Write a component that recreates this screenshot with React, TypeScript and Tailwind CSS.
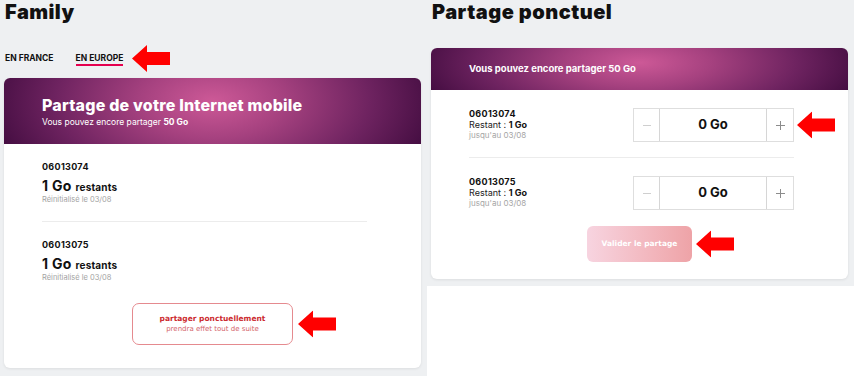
import React from 'react';

const headerBg =
  'bg-[radial-gradient(ellipse_58%_190%_at_50%_35%,#cd5997_0%,#a5417f_30%,#6e2360_65%,#3a083a_100%)]';

const RedArrow: React.FC<{ className?: string }> = ({ className }) => (
  <svg width="38" height="27" viewBox="0 0 38 27" className={className}>
    <polygon points="0,13.5 15,0 15,7 38,7 38,20 15,20 15,27" fill="#ff0000" />
  </svg>
);

const LineItem: React.FC<{ number: string }> = ({ number }) => (
  <div>
    <div className="text-[9px] leading-[12px] font-bold text-[#111] tracking-[0.3px]">{number}</div>
    <div className="mt-[4px] leading-[16px] font-bold text-[#111]">
      <span className="text-[14px] tracking-[0.3px]">1 Go</span>{' '}
      <span className="text-[10px] tracking-[0.2px]">restants</span>
    </div>
    <div className="text-[7.5px] leading-[10px] text-[#a3a3a3]">Réinitialisé le 03/08</div>
  </div>
);

const Stepper: React.FC<{ withArrow?: boolean }> = ({ withArrow }) => (
  <div className="relative flex h-[34px] border border-[#dedede] bg-white">
    <div className="w-[25px] flex items-center justify-center">
      <div className="w-[8px] h-px bg-[#cfcfcf]" />
    </div>
    <div className="w-[108px] border-x border-[#d6d6d6] flex items-center justify-center text-[13px] font-bold text-[#111]">
      0 Go
    </div>
    <div className="w-[26px] flex items-center justify-center">
      <svg width="9" height="9" viewBox="0 0 9 9">
        <path d="M4.5 0v9M0 4.5h9" stroke="#8c8c8c" strokeWidth="1" />
      </svg>
    </div>
    {withArrow && (
      <RedArrow className="absolute left-full ml-[4px] top-1/2 -translate-y-1/2" />
    )}
  </div>
);

const ShareRow: React.FC<{ number: string; withArrow?: boolean }> = ({ number, withArrow }) => (
  <div className="flex justify-between items-start">
    <div className="text-[9px] leading-[11px] text-[#222]">
      <div className="font-bold text-[#111] tracking-[0.3px]">{number}</div>
      <div>
        Restant : <span className="font-bold text-[#111]">1 Go</span>
      </div>
      <div className="text-[8px] text-[#a5a5a5]">jusqu'au 03/08</div>
    </div>
    <Stepper withArrow={withArrow} />
  </div>
);

export default function App() {
  return (
    <div className="flex w-[854px] h-[376px] overflow-hidden font-['Inter',sans-serif] text-[#111]">
      {/* Family */}
      <div className="w-[427px] bg-[#eef0f2] pl-[4px] pr-[6px] flex flex-col">
        <h1 className="text-[20px] leading-[24px] font-black text-[#111] pl-px tracking-[0.4px]">Family</h1>
        <div className="mt-[21px] h-[27px] flex items-center">
          <span className="ml-px text-[8.5px] leading-[12px] font-bold pb-[2px]">EN FRANCE</span>
          <span className="ml-[22px] text-[8.5px] leading-[12px] font-bold border-b-2 border-[#e5004f]">
            EN EUROPE
          </span>
          <RedArrow className="ml-[9px]" />
        </div>
        <div className="mt-[6px] bg-white rounded-[6px] overflow-hidden shadow-[0_1px_3px_rgba(0,0,0,0.08)]">
          <div className={`h-[66px] ${headerBg} pl-[38px] pt-[17px] text-white`}>
            <div className="text-[16px] leading-[21px] font-extrabold tracking-[0.2px]">Partage de votre Internet mobile</div>
            <div className="text-[8.5px] leading-[12px]">
              Vous pouvez encore partager <span className="font-bold">50 Go</span>
            </div>
          </div>
          <div className="pl-[38px] pr-[54px] pt-[17px] pb-[23px]">
            <LineItem number="06013074" />
            <div className="mt-[16px] border-t border-[#ececec]" />
            <div className="mt-[17px]">
              <LineItem number="06013075" />
            </div>
            <div className="mt-[20px] flex justify-center -mr-[16px]">
              <div className="relative">
                <div className="w-[161px] h-[42px] rounded-[7px] border border-[#e58a8f] flex flex-col items-center justify-center font-['DejaVu_Sans',sans-serif]">
                  <div className="text-[7.5px] leading-[11px] font-bold text-[#cc2b2f]">partager ponctuellement</div>
                  <div className="text-[7px] leading-[11px] text-[#d4636a]">prendra effet tout de suite</div>
                </div>
                <RedArrow className="absolute left-full ml-[5px] top-1/2 -translate-y-1/2" />
              </div>
            </div>
          </div>
        </div>
      </div>

      {/* Partage ponctuel */}
      <div className="flex-1 flex flex-col">
        <div className="h-[286px] bg-[#eef0f2] pl-[4px] pr-[6px]">
          <h1 className="pl-px text-[20px] leading-[24px] font-black text-[#111] tracking-[0.5px]">Partage ponctuel</h1>
          <div className="mt-[24px] bg-white rounded-[6px] overflow-hidden shadow-[0_1px_3px_rgba(0,0,0,0.08)]">
            <div className={`h-[42px] ${headerBg} pl-[38px] flex items-center`}>
              <span className="text-[9.5px] font-bold text-white">Vous pouvez encore partager 50 Go</span>
            </div>
            <div className="pl-[38px] pr-[54px] pt-[18px] pb-[17px]">
              <ShareRow number="06013074" withArrow />
              <div className="mt-[15px] border-t border-[#ececec]" />
              <div className="mt-[18px]">
                <ShareRow number="06013075" />
              </div>
              <div className="mt-[16px] flex justify-center -mr-[16px]">
                <div className="relative">
                  <div className="w-[105px] h-[36px] rounded-[6px] bg-gradient-to-r from-[#f7d4e0] to-[#eea3a7] flex items-center justify-center text-white text-[7.5px] font-bold font-['DejaVu_Sans',sans-serif]">
                    Valider le partage
                  </div>
                  <RedArrow className="absolute left-full ml-[4px] top-1/2 -translate-y-1/2" />
                </div>
              </div>
            </div>
          </div>
        </div>
        <div className="flex-1 bg-white" />
      </div>
    </div>
  );
}
